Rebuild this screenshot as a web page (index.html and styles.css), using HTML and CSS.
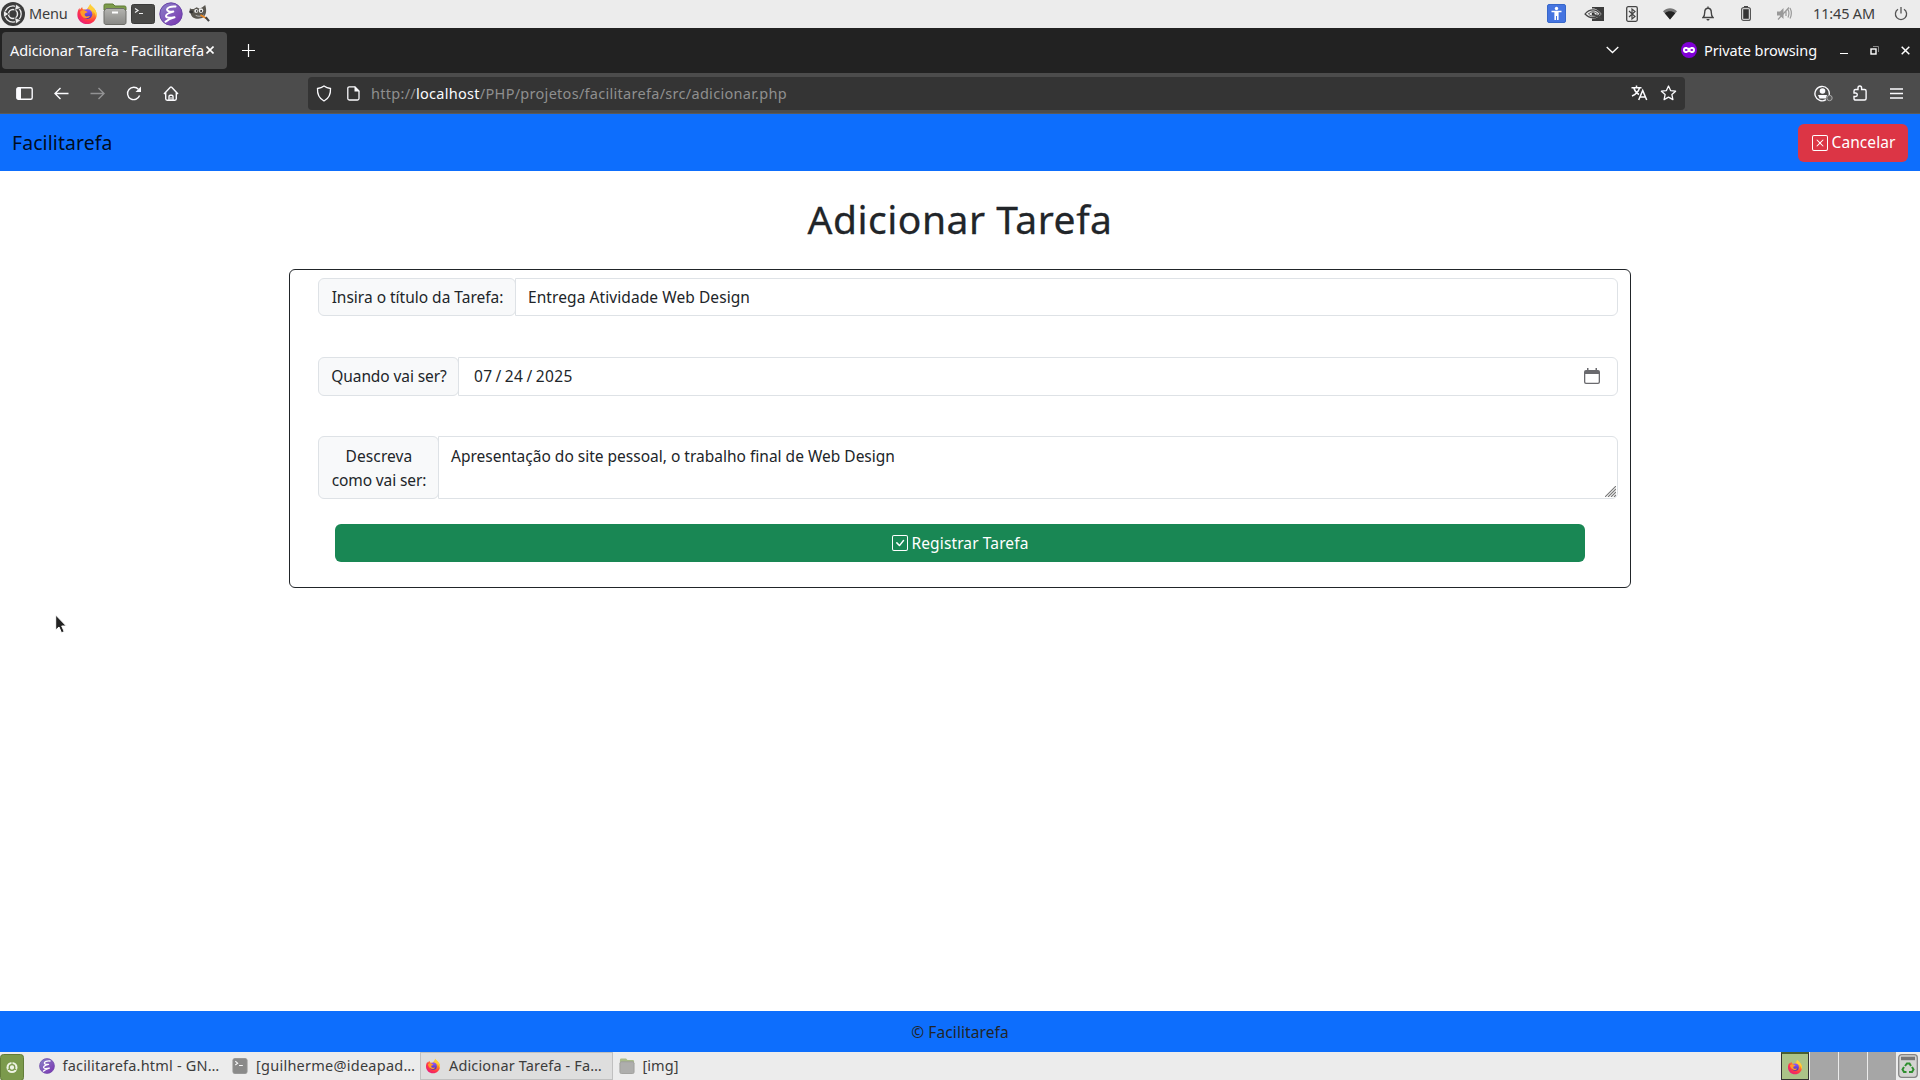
FILE: index.html
```html
<!DOCTYPE html>
<html lang="pt-BR">
<head>
<meta charset="utf-8">
<title>Adicionar Tarefa - Facilitarefa</title>
<link rel="stylesheet" href="styles.css">
</head>
<body>
<svg class="defs" aria-hidden="true">
  <defs>
    <radialGradient id="ffFlame" cx=".75" cy=".15" r="1"><stop offset="0" stop-color="#fff04a"/><stop offset=".35" stop-color="#ff9a1f"/><stop offset=".7" stop-color="#ff3647"/><stop offset="1" stop-color="#e31587"/></radialGradient>
    <linearGradient id="ffGlobe" x1="0" y1="0" x2="0" y2="1"><stop offset="0" stop-color="#9059ff"/><stop offset="1" stop-color="#4d2fb0"/></linearGradient>
    <linearGradient id="emacsBg" x1="0" y1="0" x2="1" y2="1"><stop offset="0" stop-color="#8a83c8"/><stop offset="1" stop-color="#7a32b0"/></linearGradient>
    <linearGradient id="folderBg" x1="0" y1="0" x2="0" y2="1"><stop offset="0" stop-color="#b4b4b0"/><stop offset="1" stop-color="#888885"/></linearGradient>
    <symbol id="firefox" viewBox="0 0 24 24">
      <path fill="url(#ffFlame)" d="M15.5 1c.6 1.6 1.800 2.300 3.300 3.800 2.300 2.300 3.700 4.600 3.700 8 0 5.800-4.700 10.200-10.400 10.200S1.500 18.500 1.500 12.700c0-2.700.7-5 2.300-7.200l.4 2.100C5 6.300 5.500 5.300 6.800 4.300c0 1.200.4 1.900 1 2.700 1.500-.3 2.500 0 3.400.6C12.600 5.600 14 3.700 15.500 1z"/>
      <circle cx="12.500" cy="12.200" r="5.300" fill="url(#ffGlobe)"/>
      <path fill="#ff9a2a" d="M4.500 9.500c2-2.200 5-2 6.700-.6l1.600.9c-1 1.200-2.600 1-3.200 1.800-.6.900.2 2.700 1.600 3.100 1.500.4 2.700-.9 4-.5-.9 2-3 2.700-4.800 2.300C7 15.900 5 13 4.500 9.500z"/>
      <path fill="#ffce3a" d="M15.500 1c.6 1.600 1.800 2.300 3.300 3.800 2.300 2.300 3.700 4.600 3.700 8 0 1.300-.3 2.500-.7 3.500.1-3.500-1.500-6.600-4.600-8.500C15.300 6.400 14.600 3.600 15.500 1z"/>
    </symbol>
    <symbol id="emacs" viewBox="0 0 24 24">
      <circle cx="12" cy="12" r="11.200" fill="url(#emacsBg)" stroke="#6a45a8"/>
      <path fill="none" stroke="#fff" stroke-width="2" stroke-linecap="round" stroke-linejoin="round" d="M16.500 4.500C12 4 8 5.600 8 7.600c0 1.900 3.500 2.400 6.300 2C11 10.500 6.500 12.200 7 14.300c.4 1.700 4.500 1.700 8.500 1-3 .8-6.500 2.200-9 4.400"/>
    </symbol>
    <symbol id="terminal" viewBox="0 0 24 20">
      <rect x=".5" y=".5" width="23" height="19" rx="2" fill="#4a4a48" stroke="#3c3c3b"/>
      <path d="M4 4.500 7 6.500 4 8.500M8 9.500h4" fill="none" stroke="#eee" stroke-width="1.200"/>
    </symbol>
    <symbol id="terminalSquare" viewBox="0 0 16 17">
      <rect x=".5" y=".5" width="15" height="16" rx="2" fill="#4a4a48" stroke="#5c5c5b"/>
      <path d="M3 3.500 5.500 5.500 3 7.500M7 8h4" fill="none" stroke="#fff" stroke-width="1.200"/>
    </symbol>
    <symbol id="folder" viewBox="0 0 24 22">
      <path d="M1 6V2.500C1 1.500 1.500 1 2.500 1H10l2 2h9.500c1 0 1.500.5 1.500 1.500V7H1z" fill="#7d9c4a" stroke="#5f7a35"/>
      <path d="M1 8l2-2.500h18L23 8v11.500c0 1.200-.8 2-2 2H3c-1.200 0-2-.8-2-2z" fill="url(#folderBg)" stroke="#6d6d68"/>
      <path d="M9 9.500h6" stroke="#fff" stroke-width="2"/>
    </symbol>
    <symbol id="folderSquare" viewBox="0 0 16 17">
      <path d="M.5 5V2q0-1.500 1.500-1.500h5l1.500 1.500H14q1.500 0 1.500 1.500V6z" fill="#7d9c4a"/>
      <path d="M.5 5.500 1.500 4h13l1 1.500V15q0 1.500-1.500 1.500H2Q.5 16.500.5 15z" fill="#858582" stroke="#6d6d68"/>
    </symbol>
  </defs>
</svg>

<div class="screen">
  <header class="panel">
    <svg class="mate" viewBox="0 0 24 24"><circle cx="12" cy="12" r="12" fill="#3c3c3c"/><circle cx="12" cy="12" r="8.200" fill="none" stroke="#ececec" stroke-width="1.300"/><circle cx="12" cy="12" r="4.500" fill="none" stroke="#ececec" stroke-width="1.500"/><path d="M8 12 2.500 8.500v7zM13.500 8.500 20 6l-5-4zM13.500 15.500 20 18l-5 4z" fill="#ececec" stroke="#3c3c3c" stroke-width=".8"/></svg>
    <span class="menu-label">Menu</span>
    <div class="launchers">
      <svg class="i22"><use href="#firefox"/></svg>
      <svg class="l-folder"><use href="#folder"/></svg>
      <svg class="l-term"><use href="#terminal"/></svg>
      <svg class="i23"><use href="#emacs"/></svg>
      <svg class="l-gimp" viewBox="0 0 22 18"><path d="M1 4c1.500 1 2.500 1 4 .8L8 3l3 1.500L14 3l3-2.500c1 3 1.200 6 .8 8-1 4.500-4 6.500-8 6.500-4.500 0-7.500-2-8-5.500L.5 8z" fill="#5a5750"/><circle cx="7.500" cy="6.800" r="2" fill="#eee"/><circle cx="12.500" cy="6.500" r="2.400" fill="#eee"/><circle cx="8" cy="7" r=".8"/><circle cx="12.700" cy="6.800" r=".9"/><ellipse cx="2.300" cy="8" rx="2" ry="1.500" fill="#333"/><path d="M7 11.500c3 1.500 6 1 8.500-.5" stroke="#bbb" fill="none"/><path d="m12 11 6 3.500" stroke="#e8831d" stroke-width="1.800"/><path d="m17.500 13.500 3.500 4" stroke="#444" stroke-width="2.200"/></svg>
    </div>
    <div class="tray">
      <span><svg width="19" height="19" viewBox="0 0 19 19"><rect x=".5" y=".5" width="18" height="18" rx="1.500" fill="#4574e0" stroke="#3767c9"/><circle cx="9.500" cy="4.500" r="1.700" fill="#fff"/><path d="M4.500 7.500h10M9.500 7v5M8.200 8v8M10.800 8v8" stroke="#fff" stroke-width="1.600"/></svg></span>
      <span><svg width="20" height="14" viewBox="0 0 20 14"><path d="M8 0h12v14H8z" fill="#3c3c3c"/><path d="M0 7C3 2.500 6 1.500 9 1.500S15.500 4 17.500 7c-2 2.500-5 4.500-8.500 4.500S2.500 10 0 7z" fill="#ececec"/><path d="M1 7C3.500 3.800 6 2.800 9 2.800S14.500 4.500 16.300 7c-2 2-4.300 3.700-7.300 3.700S3.500 9.500 1 7z" fill="none" stroke="#444" stroke-width="1.200"/><path d="M4.500 7C6 5.300 7 4.900 9 4.900S12 5.500 13.500 7C12 8.500 11 9 9 9S6 8.500 4.500 7z" fill="none" stroke="#444"/><circle cx="9.200" cy="6.900" r="1.500" fill="#333"/><path d="m9 7 9 5" stroke="#444" stroke-width="1.500"/></svg></span>
      <span><svg width="12" height="16" viewBox="0 0 12 16"><rect x=".7" y=".7" width="10.600" height="14.600" rx="1.500" fill="none" stroke="#444" stroke-width="1.300"/><path d="M3 5l6 5.500L6 13V3l3 2.500L3 11" fill="none" stroke="#444" stroke-width="1.200"/></svg></span>
      <span><svg width="14" height="12" viewBox="0 0 14 12"><path d="M0 3.200C4-.8 10-.8 14 3.200L7 11.500z" fill="#777"/><path d="M1.800 5.200C5 2.600 9 2.600 12.200 5.200L7 11.500z" fill="#222"/></svg></span>
      <span><svg width="12" height="15" viewBox="0 0 12 15"><path d="M1 11.500c1.300-1 1.700-2.500 1.700-5C2.700 4 3.800 2.200 6 2.200S9.300 4 9.300 6.500c0 2.500.4 4 1.700 5zM6 .5v2" fill="none" stroke="#444" stroke-width="1.400"/><path d="M4.500 13h3c0 2-3 2-3 0z" fill="#444"/></svg></span>
      <span><svg width="10" height="15" viewBox="0 0 10 15"><path d="M3 1h4" stroke="#444" stroke-width="2"/><rect x=".6" y="1.600" width="8.800" height="12.800" rx="2" fill="none" stroke="#555" stroke-width="1.200"/><rect x="2.200" y="3.200" width="5.600" height="9.600" fill="#333"/></svg></span>
      <span><svg width="15" height="13" viewBox="0 0 15 13"><path d="M0 4.500h3L6.500 1v11L3 8.500H0z" fill="#999"/><path d="M9 4v5M11 2.500c1.300 2.500 1.300 5 0 8M13 1c1.800 3.500 1.800 7 0 10.500M1 12.500 12 .5" fill="none" stroke="#999" stroke-width="1.200"/></svg></span>
      <time class="clock">11:45 AM</time>
      <svg class="power" width="14" height="14" viewBox="0 0 14 14"><path d="M4 2.200a5.600 5.600 0 1 0 6 0M7 0v6.500" fill="none" stroke="#555" stroke-width="1.300"/></svg>
    </div>
  </header>

  <div class="tabstrip">
    <div class="tab"><span>Adicionar Tarefa - Facilitarefa</span><svg width="8" height="8" viewBox="0 0 8 8"><path d="m.5.5 7 7m0-7-7 7" stroke="#fff" stroke-width="1.600"/></svg></div>
    <svg class="newtab" width="13" height="13" viewBox="0 0 13 13"><path d="M6.500 0v13M0 6.500h13" stroke="#fff" stroke-width="1.200"/></svg>
    <svg class="chevron" width="13" height="8" viewBox="0 0 13 8"><path d="m.7 1 5.800 5.500L12.300 1" fill="none" stroke="#fff" stroke-width="1.300"/></svg>
    <svg class="mask" width="16" height="16" viewBox="0 0 16 16"><circle cx="8" cy="8" r="8" fill="#8000d7"/><path d="M2 8c0-2 1-3 2.700-3C6.300 5 7 5.800 8 5.800S9.700 5 11.300 5C13 5 14 6 14 8s-1.300 3-2.700 3c-1.500 0-2.300-1.100-3.300-1.100S6.200 11 4.700 11C3.300 11 2 10 2 8z" fill="#fff"/><ellipse cx="5.200" cy="8" rx="1.400" ry=".9" fill="#8000d7"/><ellipse cx="10.800" cy="8" rx="1.400" ry=".9" fill="#8000d7"/></svg>
    <span class="private">Private browsing</span>
    <div class="winctl">
      <svg width="8" height="9" viewBox="0 0 8 9"><path d="M0 7.500h8" stroke="#fff"/></svg>
      <svg width="9" height="9" viewBox="0 0 9 9"><path d="M3 .5h5.500V6" fill="none" stroke="#888"/><rect x="1" y="3" width="5" height="5" fill="none" stroke="#fff" stroke-width="1.400"/></svg>
      <svg width="9" height="9" viewBox="0 0 9 9"><path d="m.7.7 7.600 7.600m0-7.600L.7 8.300" stroke="#fff" stroke-width="1.500"/></svg>
    </div>
  </div>

  <div class="toolbar">
    <div class="nav-buttons">
      <span><svg width="17" height="13" viewBox="0 0 17 13"><rect x=".8" y=".8" width="15.400" height="11.400" rx="1.500" fill="none" stroke="#fbfbfe" stroke-width="1.400"/><path d="M1 1h4v11H1z" fill="#fbfbfe"/></svg></span>
      <span><svg width="15" height="13" viewBox="0 0 15 13"><path d="M14.500 6.500H1.200M6.500 1 1 6.500 6.500 12" fill="none" stroke="#fbfbfe" stroke-width="1.400"/></svg></span>
      <span class="dim"><svg width="15" height="13" viewBox="0 0 15 13"><path d="M.5 6.500h13.300M8.500 1 14 6.500 8.500 12" fill="none" stroke="#fbfbfe" stroke-width="1.400"/></svg></span>
      <span><svg width="16" height="15" viewBox="0 0 16 15"><path d="M13.600 9.500A6.200 6.200 0 1 1 12.500 3.400" fill="none" stroke="#fbfbfe" stroke-width="1.400"/><path d="M15 .5V6H9.500z" fill="#fbfbfe"/></svg></span>
      <span><svg width="16" height="15" viewBox="0 0 16 15"><path d="M1 8 7.300 1.200q.7-.6 1.400 0L15 8M2.700 6.500v6.300q0 1.400 1.400 1.400h7.800q1.400 0 1.400-1.400V6.500M6 14v-3.500q0-1.300 1.300-1.300h1.400q1.300 0 1.300 1.300V14" fill="none" stroke="#fbfbfe" stroke-width="1.400"/><path d="M8 11v3" stroke="#fbfbfe"/></svg></span>
    </div>
    <div class="urlbar">
      <svg class="shield" width="16" height="17" viewBox="0 0 16 17"><path d="M8 1c2 1.500 4.200 2.200 6.500 2.500.3 5.500-1.600 10-6.500 12.500C3.100 13.500 1.200 9 1.500 3.500 3.800 3.200 6 2.500 8 1z" fill="none" stroke="#fbfbfe" stroke-width="1.300"/></svg>
      <svg class="page" width="13" height="15" viewBox="0 0 13 15"><path d="M8 .8H2.300Q.8.800.8 2.300v10.200q0 1.500 1.500 1.500h8.200q1.500 0 1.500-1.500V5z" fill="none" stroke="#fbfbfe" stroke-width="1.300"/><path d="M7.500.5V5.500h5z" fill="#fbfbfe"/></svg>
      <span class="url">http://<b>localhost</b>/PHP/projetos/facilitarefa/src/adicionar.php</span>
      <span class="urlicon"><svg width="17" height="16" viewBox="0 0 17 16"><path d="M.5 2.700h10M5.500.5v2.200M8.500 3C7.500 6.500 4.500 9.500 1 11M2.800 3C4 6.500 6 8.500 8 9.500M7.700 15l4-9.500 4 9.500M9 12h5.300" fill="none" stroke="#fbfbfe" stroke-width="1.500"/></svg></span>
      <span class="urlicon"><svg width="17" height="16" viewBox="0 0 17 16"><path d="m8.500 1 2.100 4.600 5 .6-3.700 3.400 1 5-4.400-2.500-4.400 2.500 1-5L1.400 6.200l5-.6z" fill="none" stroke="#fbfbfe" stroke-width="1.300" stroke-linejoin="round"/></svg></span>
    </div>
    <div class="nav-buttons right">
      <span><svg width="19" height="17" viewBox="0 0 19 17"><path d="M12 14.700A7.200 7.200 0 1 1 15.200 10" fill="none" stroke="#fbfbfe" stroke-width="1.400"/><circle cx="8.500" cy="6" r="2.800" fill="#fbfbfe"/><path d="M4 10h9l-1 3.500H5.500z" fill="#fbfbfe"/><circle cx="15.500" cy="13" r="2.700" fill="#5a5a5a" stroke="#aaa"/></svg></span>
      <span><svg width="14" height="16" viewBox="0 0 14 16"><path d="M1 8V6Q1 4.500 2.500 4.500H5V3Q5 1 6.800 1T8.600 3V4.500h3q1.500 0 1.500 1.500v7.500q0 1.500-1.500 1.500h-9Q1 15 1 13.500v-2h1.700Q4.300 11.500 4.300 9.800T2.700 8z" fill="none" stroke="#fbfbfe" stroke-width="1.400"/></svg></span>
      <span><svg width="13" height="11" viewBox="0 0 13 11"><path d="M0 1h13M0 5.500h13M0 10h13" stroke="#fbfbfe" stroke-width="1.300"/></svg></span>
    </div>
  </div>

  <main class="app">
    <nav class="navbar">
      <span class="brand">Facilitarefa</span>
      <button class="btn cancel"><svg width="16" height="16" viewBox="0 0 16 16" fill="#fff"><path d="M14 1a1 1 0 0 1 1 1v12a1 1 0 0 1-1 1H2a1 1 0 0 1-1-1V2a1 1 0 0 1 1-1zM2 0a2 2 0 0 0-2 2v12a2 2 0 0 0 2 2h12a2 2 0 0 0 2-2V2a2 2 0 0 0-2-2z"/><path d="M4.646 4.646a.5.5 0 0 1 .708 0L8 7.293l2.646-2.647a.5.5 0 0 1 .708.708L8.707 8l2.647 2.646a.5.5 0 0 1-.708.708L8 8.707l-2.646 2.647a.5.5 0 0 1-.708-.708L7.293 8 4.646 5.354a.5.5 0 0 1 0-.708"/></svg><span>Cancelar</span></button>
    </nav>
    <h1>Adicionar Tarefa</h1>
    <form class="card">
      <div class="group g1"><label>Insira o título da Tarefa:</label><div class="field title">Entrega Atividade Web Design</div></div>
      <div class="group g2"><label>Quando vai ser?</label><div class="field date"><span>07</span><i>/</i><span>24</span><i>/</i><span>2025</span><svg class="cal" width="16" height="16" viewBox="0 0 16 16"><path d="M3 0h1.500v2h7V0H13v2h1q2 0 2 2v10q0 2-2 2H2q-2 0-2-2V4q0-2 2-2h1zM1.300 6v8q0 .8.8.8h11.800q.8 0 .8-.8V6z" fill="#6a6a6e" fill-rule="evenodd"/></svg></div></div>
      <div class="group g3"><label><span class="l1">Descreva</span><span>como vai ser:</span></label><div class="field desc">Apresentação do site pessoal, o trabalho final de Web Design<svg class="grip" width="11" height="11" viewBox="0 0 11 11"><path d="M0 11 11 0M3 11l8-8M6 11l5-5M9 11l2-2" stroke="#777" stroke-width="1.100"/></svg></div></div>
      <button class="btn submit" type="button"><svg width="16" height="16" viewBox="0 0 16 16" fill="#fff"><path d="M14 1a1 1 0 0 1 1 1v12a1 1 0 0 1-1 1H2a1 1 0 0 1-1-1V2a1 1 0 0 1 1-1zM2 0a2 2 0 0 0-2 2v12a2 2 0 0 0 2 2h12a2 2 0 0 0 2-2V2a2 2 0 0 0-2-2z"/><path d="M10.970 4.970a.75.75 0 0 1 1.071 1.050l-3.992 4.990a.75.75 0 0 1-1.080.020L4.324 8.384a.75.75 0 1 1 1.060-1.060l2.094 2.093 3.473-4.425z"/></svg><span>Registrar Tarefa</span></button>
    </form>
    <footer class="foot">© Facilitarefa</footer>
  </main>

  <div class="taskbar">
    <svg class="showdesk" width="24" height="27" viewBox="0 0 24 27"><rect x=".5" y=".5" width="23" height="26" rx="3" fill="#7b9a4c" stroke="#627d39"/><circle cx="12" cy="13.500" r="5.500" fill="#eef3e4"/><circle cx="12" cy="13.500" r="2.800" fill="none" stroke="#7b9a4c" stroke-width="1.300"/><path d="M12 8v3M7.500 16l2.500-1.500M16.500 16 14 14.500" stroke="#7b9a4c"/></svg>
    <div class="task"><svg class="i16"><use href="#emacs"/></svg><span class="t1">facilitarefa.html - GN…</span></div>
    <div class="task"><svg class="i16 faded"><use href="#terminalSquare"/></svg><span class="t2">[guilherme@ideapad…</span></div>
    <div class="task active"><svg class="i16"><use href="#firefox"/></svg><span class="t3">Adicionar Tarefa - Fa…</span></div>
    <div class="task"><svg class="i16 faded"><use href="#folderSquare"/></svg><span class="t4">[img]</span></div>
    <div class="spaces"><div class="space on"><svg class="i16"><use href="#firefox"/></svg></div><div class="space"></div><div class="space"></div><div class="space"></div></div>
    <svg class="trash" width="20" height="24" viewBox="0 0 20 24"><rect x=".7" y=".7" width="18.600" height="22.600" rx="3" fill="#d4d4d2" stroke="#858585" stroke-width="1.300"/><path d="M3 2.700h14v3.500H3z" fill="#777"/><path d="m7 12 2-2.500h2.500L13 12M14 13l1.500 2.500L14 18h-3M8.500 18H6l-1.500-2.500L6 13" fill="none" stroke="#2f8f2f" stroke-width="2"/></svg>
  </div>
  <svg class="cursor" width="13" height="20" viewBox="0 0 13 20"><path d="M.7 1v15l3.300-3 2.500 5.800 2.700-1.200-2.500-5.600h4.600z" fill="#222" stroke="#fff"/></svg>
</div>
</body>
</html>
```
FILE: styles.css
```css
* { box-sizing: border-box; }
body { margin: 0; font-family: "Noto Sans", sans-serif; font-size: 15.5px; color: #212529; }
svg { display: block; flex: none; }
.defs { position: absolute; width: 0; height: 0; }
.screen { position: relative; width: 1920px; height: 1080px; display: flex; flex-direction: column; overflow: hidden; white-space: nowrap; background: #fff; }

/* desktop panel */
.panel { height: 28px; flex: none; display: flex; align-items: center; background: #ececec; padding-left: 1px; font-size: 14.5px; color: #3c3c3c; }
.mate { width: 24px; height: 24px; }
.menu-label { width: 46px; padding: 0 0 2px 4px; letter-spacing: -.19px; }
.launchers { display: flex; align-items: center; padding-left: 5px; }
.i22 { width: 22px; height: 22px; margin-right: 5px; }
.l-folder { width: 24px; height: 22px; margin-right: 4px; }
.l-term { width: 24px; height: 20px; margin-right: 4px; }
.i23 { width: 24px; height: 24px; margin-right: 6px; }
.l-gimp { width: 21px; height: 18px; margin-top: -2px; }
.tray { display: flex; align-items: center; margin-left: auto; }
.tray > span { width: 38px; display: flex; justify-content: center; }
.tray svg { margin-bottom: 1px; }
.clock { width: 63px; margin-left: 10px; padding-bottom: 2px; letter-spacing: -.16px; }
.tray .power { margin: 0 12px 1px 18px; }

/* browser chrome */
.tabstrip { height: 45px; flex: none; display: flex; align-items: center; background: #222; color: #fbfbfe; font-size: 14.5px; padding-left: 2px; }
.tab { width: 225px; height: 37px; display: flex; align-items: center; gap: 3px; padding: 0 0 2px 8px; background: #4c4c4c; border-radius: 4px; letter-spacing: -.088px; }
.tab span { width: 193px; }
.newtab { margin-left: 15px; }
.chevron { margin: 0 0 1px 1351px; }
.mask { margin: 0 0 1px 62px; }
.private { width: 136px; padding: 0 0 2px 7px; letter-spacing: -.078px; }
.winctl { display: flex; align-items: center; gap: 22px; margin: 0 0 1px 7px; }
.toolbar { height: 41px; flex: none; display: flex; align-items: center; background: #4c4c4c; border-bottom: 1px solid #5a5a5a; padding-left: 6.500px; }
.nav-buttons { display: flex; }
.nav-buttons span { width: 36.5px; display: flex; align-items: center; justify-content: center; }
.nav-buttons .dim { opacity: .4; }
.nav-buttons.right { margin-left: 120px; }
.urlbar { width: 1377px; height: 33px; margin-left: 119px; display: flex; align-items: center; background: #343434; border-radius: 4px; padding: 0 2px 0 8px; font-size: 14.5px; }
.page { margin: 0 11px 0 15px; }
.url { flex: 1; color: #8f8f8f; letter-spacing: .285px; }
.url b { font-weight: 400; color: #fbfbfe; }
.urlicon { width: 29px; display: flex; justify-content: center; }

/* page */
.app { flex: 1; display: flex; flex-direction: column; align-items: center; }
.navbar { width: 100%; height: 57px; display: flex; align-items: center; justify-content: space-between; background: #0d6efd; padding: 0 12px; }
.brand { font-size: 19.4px; letter-spacing: .11px; color: rgba(0, 0, 0, .9); }
.btn { height: 38px; display: flex; align-items: center; justify-content: center; gap: 4px; border: 0; border-radius: 6px; color: #fff; font: 15.5px "Noto Sans", sans-serif; letter-spacing: .08px; padding: 0; }
.cancel { width: 110px; background: #dc3545; padding-left: 1px; }
.cancel span { padding-bottom: 2px; }
.submit { width: 1250px; background: #198754; margin: 25px 0 0 17px; letter-spacing: .119px; }
h1 { margin: 23px 0 25px; height: 50px; font-size: 39px; font-weight: 400; line-height: 50px; letter-spacing: .52px; -webkit-text-stroke: .3px #212529; }
.card { width: 1342px; height: 319px; border: 1px solid #212529; border-radius: 6px; padding: 8px 12px 0 28px; }
.group { display: flex; height: 38px; }
.group label { flex: none; display: flex; flex-direction: column; align-items: center; justify-content: center; background: #f8f9fa; border: 1px solid #dee2e6; border-radius: 6px; line-height: 24px; padding-left: 1px; }
.field { flex: 1; border: 1px solid #dee2e6; border-radius: 0 6px 6px 0; margin-left: -1px; padding: 6px 12px; line-height: 24px; }
.g1 label { width: 198px; letter-spacing: -.01px; }
.title { letter-spacing: .08px; }
.g2 { height: 39px; margin-top: 41px; }
.g2 label { width: 141px; letter-spacing: -.09px; padding-bottom: 1px; }
.date { display: flex; align-items: center; padding: 0 17px 1px 15px; letter-spacing: .4px; }
.date i { font-style: normal; width: 12.300px; text-align: center; }
.cal { margin: 0 0 1px auto; }
.g3 { height: 63px; margin-top: 40px; }
.g3 label { width: 121px; letter-spacing: -.1px; }
.g3 .l1 { letter-spacing: .1px; }
.desc { position: relative; padding-top: 7px; letter-spacing: 0; }
.grip { position: absolute; right: 1px; bottom: 1px; }
.foot { width: 100%; height: 41px; margin-top: auto; display: flex; align-items: center; justify-content: center; background: #0d6efd; letter-spacing: .1px; }

/* window list */
.taskbar { height: 28px; flex: none; display: flex; align-items: center; background: #ececec; color: #3c3c3c; font-size: 14.5px; }
.showdesk { margin: 2px 9px 0 0; }
.task { width: 193.500px; height: 28px; display: flex; align-items: center; gap: 8px; padding-left: 5.500px; }
.task span { padding-bottom: 2px; }
.task.active { width: 193px; background: #dedede; border: 1px solid #c0c0c0; padding-left: 4px; }
.i16 { width: 16px; height: 16px; }
.faded { opacity: .6; }
.t1 { letter-spacing: .2px; }
.t2 { letter-spacing: .25px; }
.t3 { letter-spacing: .15px; }
.t4 { letter-spacing: .047px; }
.spaces { display: flex; gap: 1px; margin-left: auto; height: 28px; }
.space { width: 28px; background: #a6a6a6; display: flex; align-items: center; justify-content: center; }
.space.on { background: #abc388; border: 1px solid #333; border-top: 2px solid #4b6030; }
.trash { margin: 0 2px; }
.cursor { position: absolute; left: 55px; top: 614px; }
```
